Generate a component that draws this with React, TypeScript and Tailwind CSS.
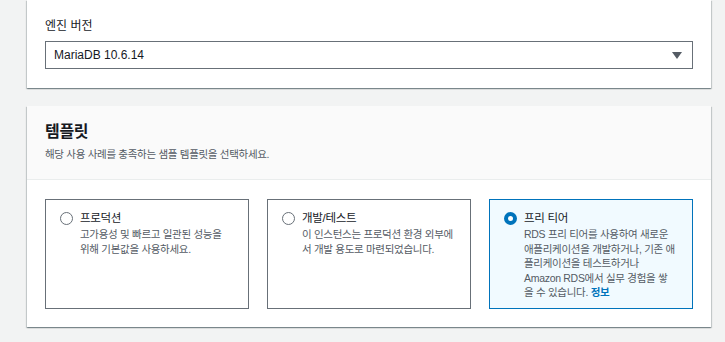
import { useState } from "react";

const FONT = { fontFamily: '"Liberation Sans", "Noto Sans CJK KR", sans-serif' };

const templates = [
  {
    id: "prod",
    title: "프로덕션",
    lines: ["고가용성 및 빠르고 일관된 성능을", "위해 기본값을 사용하세요."],
  },
  {
    id: "dev",
    title: "개발/테스트",
    lines: ["이 인스턴스는 프로덕션 환경 외부에", "서 개발 용도로 마련되었습니다."],
  },
  {
    id: "free",
    title: "프리 티어",
    lines: [
      "RDS 프리 티어를 사용하여 새로운",
      "애플리케이션을 개발하거나, 기존 애",
      "플리케이션을 테스트하거나",
      "Amazon RDS에서 실무 경험을 쌓",
      "을 수 있습니다.",
    ],
    info: true,
  },
];

const cardShadow =
  "shadow-[0_1px_1px_0_rgba(0,28,36,0.3),1px_1px_1px_0_rgba(0,28,36,0.15),-1px_1px_1px_0_rgba(0,28,36,0.15)]";

const Radio = ({ checked }: { checked: boolean }) =>
  checked ? (
    <span className="mt-[2px] box-border block h-[13px] w-[13px] shrink-0 rounded-full border-[4px] border-[#0073bb] bg-white" />
  ) : (
    <span className="mt-[2px] box-border block h-[13px] w-[13px] shrink-0 rounded-full border border-[#687078] bg-white" />
  );

const App = () => {
  const [selected, setSelected] = useState("free");

  return (
    <div className="min-h-[342px] bg-[#f2f3f3] pl-[27px] pr-[14px] text-[#16191f]" style={FONT}>
      {/* 엔진 버전 */}
      <div className={`bg-white px-[18px] pt-[18px] pb-[19px] ${cardShadow}`}>
        <div className="text-[12px] leading-[16px] text-[#16191f]">엔진 버전</div>
        <div className="mt-[7px] flex h-[28px] items-center justify-between border border-[#687078] bg-white pl-[8px] pr-[10px]">
          <span className="text-[12px]">MariaDB 10.6.14</span>
          <svg width="10" height="7" viewBox="0 0 10 7">
            <path d="M0 0h10L5 7z" fill="#545b64" />
          </svg>
        </div>
      </div>

      {/* 템플릿 */}
      <div className={`mt-[18px] bg-white ${cardShadow}`}>
        <div className="border-b border-[#eaeded] bg-[#fafafa] px-[18px] pt-[16px] pb-[17px]">
          <h2 className="text-[16px] leading-[20px] font-bold tracking-[-0.3px]">템플릿</h2>
          <p className="mt-[4px] text-[10.5px] leading-[16px] tracking-[-0.3px] text-[#545b64]">
            해당 사용 사례를 충족하는 샘플 템플릿을 선택하세요.
          </p>
        </div>
        <div className="grid grid-cols-3 gap-[18px] px-[18px] pt-[19px] pb-[18px]">
          {templates.map((t) => {
            const on = selected === t.id;
            return (
              <div
                key={t.id}
                onClick={() => setSelected(t.id)}
                className={`flex h-[110px] cursor-pointer gap-[7px] border pl-[14px] pr-[14px] pt-[10px] ${
                  on ? "border-[#0073bb] bg-[#f1faff]" : "border-[#687078] bg-white"
                }`}
              >
                <Radio checked={on} />
                <div className="min-w-0">
                  <div className="text-[11.5px] leading-[16px] tracking-[-0.3px]">{t.title}</div>
                  <div className="mt-[1px] text-[10.5px] leading-[14.5px] tracking-[-0.3px] text-[#545b64]">
                    {t.lines.map((l, i) => (
                      <div key={i} className="whitespace-nowrap">
                        {l}
                        {t.info && i === t.lines.length - 1 && (
                          <>
                            {" "}
                            <span className="font-bold text-[#0073bb]">정보</span>
                          </>
                        )}
                      </div>
                    ))}
                  </div>
                </div>
              </div>
            );
          })}
        </div>
      </div>
    </div>
  );
};

export default App;
